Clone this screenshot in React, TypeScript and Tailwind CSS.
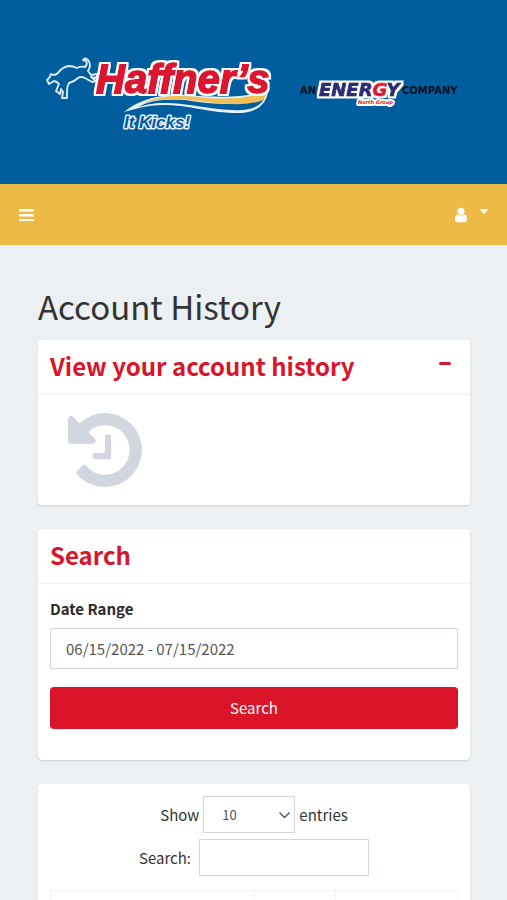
import type { ReactNode } from "react";

// white edge around the logo lettering
function OutlineFilter({ id }: { id: string }) {
  return (
    <filter id={id} x="-10%" y="-30%" width="120%" height="160%">
      <feMorphology in="SourceAlpha" operator="dilate" radius="1.5" result="edge" />
      <feFlood floodColor="#ffffff" />
      <feComposite in2="edge" operator="in" />
      <feMerge>
        <feMergeNode />
        <feMergeNode in="SourceGraphic" />
      </feMerge>
    </filter>
  );
}

function HaffnersLogo() {
  return (
    <svg
      role="img"
      aria-label="Haffner's It Kicks!"
      className="h-20 w-[230px] shrink-0"
      viewBox="0 0 230 80"
      fontFamily="'Liberation Sans', Arial, sans-serif"
      fontWeight="bold"
      fontStyle="italic"
    >
      <OutlineFilter id="haffners-outline" />
      <path
        d="M2 28 Q5 26 6 22 L8 23 Q11 23 13 21 Q17 15 24 14 Q28 14 32 16 Q36 14 40 15 Q43 12 41 9 L38 8 Q40 5 43 8 Q47 13 43 19 L46 23 L52 22 Q53 25 50 26 L46 25 L51 29 L47 30 L40 26 Q36 24 33 26 Q29 30 24 31 Q22 34 22 39 L22 46 L17 46 L18 40 L16 37 L15 42 L11 39 L14 32 Q11 29 9 29 L4 32 Z"
        fill="#005e9f"
        stroke="#dcecf8"
        strokeWidth="1.9"
        strokeLinejoin="round"
      />
      <path
        d="M79 60 C98 45 120 42 142 43 C170 45 200 47 223 38 C222 55 208 62 188 61 C160 60 145 53 118 53 C103 53 94 56 79 60Z"
        fill="#e8f1f8"
      />
      <path
        d="M93 55 C105 48 120 47 140 48 C170 53 198 54 219 47 C214 56 202 59 188 58 C160 57 145 51 118 51 C108 51 101 53 93 55Z"
        fill="#005e9f"
      />
      <path
        d="M98 51 C115 43 135 43 153 45 C178 48 202 47 221 40 C221 45 219 48 216 49 C196 55 172 51 153 49 C132 46 116 46 98 51Z"
        fill="#f0bf56"
      />
      <text
        x="51"
        y="41"
        fontSize="40"
        fill="#dc1630"
        stroke="#dc1630"
        strokeWidth="1.8"
        filter="url(#haffners-outline)"
      >
        Haffner’s
      </text>
      <text
        x="79"
        y="76"
        fontSize="17"
        fill="#005e9f"
        stroke="#e8f1f8"
        strokeWidth="3"
        strokeLinejoin="round"
        paintOrder="stroke"
      >
        It Kicks!
      </text>
    </svg>
  );
}

function EnergyLogo() {
  return (
    <svg
      role="img"
      aria-label="An Energy North Group company"
      className="h-8 w-40 shrink-0"
      viewBox="0 0 160 32"
      fontFamily="'DejaVu Sans', Verdana, sans-serif"
      fontWeight="bold"
    >
      <OutlineFilter id="energy-outline" />
      <text x="0" y="18" fontSize="10" fill="#07111c">
        AN
      </text>
      <g fontStyle="italic">
        <text
          x="58"
          y="28"
          fontSize="5"
          fill="#dc1630"
          stroke="#ffffff"
          strokeWidth="4"
          strokeLinejoin="round"
          paintOrder="stroke"
        >
          North Group
        </text>
        <text
          x="19"
          y="20"
          fontSize="18"
          fill="#2b2a78"
          stroke="#2b2a78"
          strokeWidth="1"
          filter="url(#energy-outline)"
        >
          ENER<tspan fill="#dc1630" stroke="#dc1630">G</tspan>Y
        </text>
      </g>
      <text x="102" y="18" fontSize="10" fill="#07111c">
        COMPANY
      </text>
    </svg>
  );
}

function UserIcon() {
  return (
    <svg className="h-4 w-3" viewBox="0 0 1280 1536" fill="currentColor" aria-hidden="true">
      <path d="M1280 1271q0 109-62.5 187t-150.5 78h-854q-88 0-150.5-78t-62.5-187q0-85 8.5-160.5t31.5-152 58.5-131 94-89 134.5-34.5q131 128 313 128t313-128q76 0 134.5 34.5t94 89 58.5 131 31.5 152 8.5 160.5zm-256-887q0 159-112.5 271.5t-271.5 112.5-271.5-112.5-112.5-271.5 112.5-271.5 271.5-112.5 271.5 112.5 112.5 271.5z" />
    </svg>
  );
}

function HistoryIcon() {
  return (
    <svg className="size-[74px]" viewBox="0 128 1536 1536" fill="#d2d6de" aria-hidden="true">
      <path d="M1536 896q0 156-61 298t-164 245-245 164-298 61q-172 0-327-72.5t-264-204.5q-7-10-6.5-22.5t8.5-20.5l137-138q10-9 25-9 16 2 23 12 73 95 179 147t225 52q104 0 198.5-40.5t163.5-109.5 109.5-163.5 40.5-198.5-40.5-198.5-109.5-163.5-163.5-109.5-198.5-40.5q-98 0-188 35.5t-160 101.5l137 138q31 30 14 69-17 40-59 40h-448q-26 0-45-19t-19-45v-448q0-42 40-59 39-17 69 14l130 129q107-101 244.5-156.5t284.5-55.5q156 0 298 61t245 164 164 245 61 298zm-640-288v448q0 14-9 23t-23 9h-320q-14 0-23-9t-9-23v-64q0-14 9-23t23-9h224v-352q0-14 9-23t23-9h64q14 0 23 9t9 23z" />
    </svg>
  );
}

function Card({ title, action, children }: { title?: string; action?: ReactNode; children: ReactNode }) {
  return (
    <section className="mb-6 rounded bg-white shadow-[0_1px_2px_rgba(0,0,0,0.15)]">
      {title && (
        <div className="flex items-start justify-between border-b border-[#f0f1f3] px-3 pt-[9px] pb-[11px]">
          <h2 className="text-[24px] leading-[34px] font-bold text-[#d9142b]">{title}</h2>
          {action}
        </div>
      )}
      {children}
    </section>
  );
}

export default function App() {
  return (
    <div className="min-h-screen bg-[#ecf0f3] font-['Noto_Sans_CJK_SC','Open_Sans',sans-serif] text-[15px] leading-6 text-[#333333]">
      <header>
        <div className="flex h-46 items-center gap-[25px] bg-[#005e9f] pl-[45px]">
          <HaffnersLogo />
          <EnergyLogo />
        </div>
        <nav className="flex h-[61px] items-center justify-between bg-[#edbb45] pr-[18px] pl-[19px] text-white">
          <button type="button" aria-label="Toggle navigation">
            <svg className="h-3 w-[15px]" viewBox="0 0 15 12" fill="currentColor" aria-hidden="true">
              <rect width="15" height="2.5" rx="0.8" />
              <rect y="5" width="15" height="2.5" rx="0.8" />
              <rect y="10" width="15" height="2.5" rx="0.8" />
            </svg>
          </button>
          <button type="button" aria-label="User menu" className="flex items-center gap-3">
            <UserIcon />
            <svg className="mb-1.5 h-[5px] w-[10px]" viewBox="0 0 10 5" fill="currentColor" aria-hidden="true">
              <path d="M0.5 0h9L5 5z" />
            </svg>
          </button>
        </nav>
      </header>

      <main className="pt-[38px] pr-[37px] pl-[38px]">
        <h1 className="mb-[10px] text-[33px] leading-[47px]">Account History</h1>

        <Card
          title="View your account history"
          action={
            <button type="button" aria-label="Collapse" className="px-[7px] pt-[13px] pb-3">
              <span className="block h-[3px] w-3 rounded-xs bg-[#d9142b]" />
            </button>
          }
        >
          <div className="px-[30px] py-[18px]">
            <HistoryIcon />
          </div>
        </Card>

        <Card title="Search">
          <form className="px-3 pt-[13px] pb-[31px]" onSubmit={(e) => e.preventDefault()}>
            <label htmlFor="date-range" className="mb-[7px] block font-bold text-[#2b2b2b]">
              Date Range
            </label>
            <input
              id="date-range"
              type="text"
              defaultValue="06/15/2022 - 07/15/2022"
              className="mb-[18px] block h-[41px] w-full border border-[#d2d6de] bg-white px-[15px] text-[#555555]"
            />
            <button type="submit" className="block h-[42px] w-full rounded bg-[#dc1429] text-white">
              Search
            </button>
          </form>
        </Card>

        <Card>
          <div className="px-3 pt-3">
            <div className="mb-[6px] flex items-center justify-center gap-1">
              <label htmlFor="page-size">Show</label>
              <span className="grid h-[37px] w-[92px] items-center">
                <select
                  id="page-size"
                  defaultValue="10"
                  className="col-start-1 row-start-1 h-full w-full appearance-none border border-[#d2d6de] bg-white pl-[18px] text-[13px] text-[#555555]"
                >
                  <option>10</option>
                  <option>25</option>
                  <option>50</option>
                  <option>100</option>
                </select>
                <svg
                  className="pointer-events-none col-start-1 row-start-1 mr-[5px] h-[6px] w-[11px] justify-self-end"
                  viewBox="0 0 11 6"
                  fill="none"
                  stroke="#555555"
                  strokeWidth="1.4"
                  aria-hidden="true"
                >
                  <path d="M0.5 0.5l5 5 5-5" />
                </svg>
              </span>
              <span>entries</span>
            </div>
            <div className="mb-3.5 flex items-center justify-center gap-2">
              <label htmlFor="table-search">Search:</label>
              <input
                id="table-search"
                type="search"
                className="h-[37px] w-[170px] border border-[#d2d6de] bg-white px-3 text-[13px]"
              />
            </div>
            <table className="w-full table-fixed border-collapse border border-[#f4f4f4]">
              <thead>
                <tr>
                  <th className="h-10 w-1/2 border border-[#f4f4f4]" />
                  <th className="h-10 border border-[#f4f4f4]" />
                  <th className="h-10 w-[30%] border border-[#f4f4f4]" />
                </tr>
              </thead>
            </table>
          </div>
        </Card>
      </main>
    </div>
  );
}
